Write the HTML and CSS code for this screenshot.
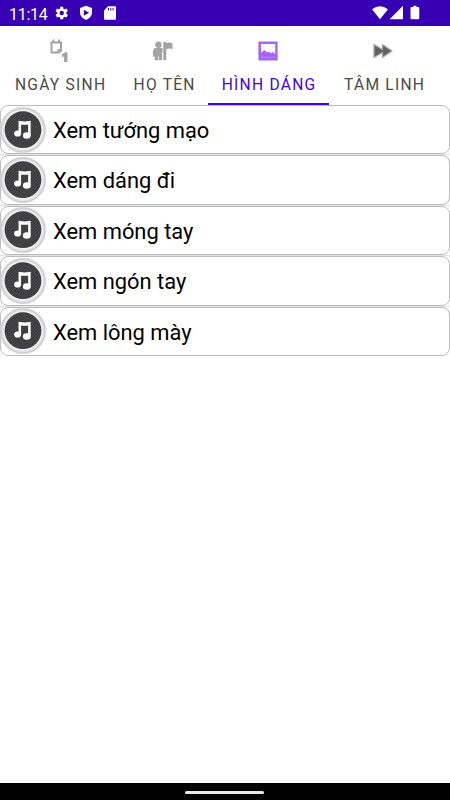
FILE: index.html
```html
<!DOCTYPE html>
<html lang="vi">
<head>
<meta charset="utf-8">
<title>Xem tướng</title>
<link rel="stylesheet" href="styles.css">
</head>
<body>
<svg width="0" height="0" class="defs" aria-hidden="true">
  <defs>
    <pattern id="stripe" width="3" height="3" patternUnits="userSpaceOnUse"><path d="M0 3L3 0" stroke="#505052" stroke-width=".6"/></pattern>
    <radialGradient id="ring"><stop offset=".78" stop-color="#f0f0f0"/><stop offset=".87" stop-color="#e0e0e0"/><stop offset=".93" stop-color="#cacaca"/><stop offset="1" stop-color="#e8e8e8" stop-opacity=".2"/></radialGradient>
    <symbol id="music" viewBox="0 0 48 48">
      <circle cx="24" cy="24" r="23.800" fill="url(#ring)"/>
      <circle cx="24" cy="23.700" r="19.700" fill="#f2f2f2"/>
      <circle cx="24" cy="23.700" r="18.400" fill="#3d3d3f"/>
      <circle cx="24" cy="23.700" r="18" fill="url(#stripe)"/>
      <path d="M20.800 28V16.300q4.800 1 9.600 0v13" fill="none" stroke="#fff" stroke-width="2.500"/>
      <path d="M20.500 17.300q5 1 10 0" fill="none" stroke="#fff" stroke-width="2"/>
      <ellipse cx="18.600" cy="27.500" rx="3.500" ry="3.100" fill="#fff"/>
      <ellipse cx="27.800" cy="29.500" rx="3.900" ry="3.300" fill="#fff"/>
    </symbol>
  </defs>
</svg>
<header class="status">
  <span class="time">11:14</span>
  <svg class="gear" width="18" height="18" viewBox="0 0 24 24"><path fill="#fff" fill-rule="evenodd" d="M19.140 12.940a7 7 0 0 0 0-1.880l2.030-1.580-1.920-3.320-2.390.960a7 7 0 0 0-1.620-.940L14.880 3.640h-3.840l-.36 2.540q-.9.350-1.620.940l-2.390-.96-1.920 3.320 2.030 1.580a7 7 0 0 0 0 1.880l-2.030 1.580 1.920 3.320 2.390-.96q.74.600 1.620.940l.36 2.540h3.840l.36-2.540q.88-.36 1.620-.94l2.390.96 1.920-3.320zM13 14.900a2.900 2.900 0 1 1 0-5.800 2.900 2.900 0 0 1 0 5.800z"/></svg>
  <svg class="shield" width="14" height="16" viewBox="0 0 14 16"><path fill="#fff" d="M7 .7l6 2.300v4.300q0 5-6 7.800-6-2.800-6-7.800V3z"/><path fill="#3700b3" d="M4.900 4.700v6L10 7.700z"/></svg>
  <svg class="sd" width="12" height="14" viewBox="0 0 12 14"><path fill="#fff" d="M4 .3h7q1 0 1 1v11.400q0 1-1 1H1q-1 0-1-1V4.500z"/><path stroke="#3700b3" d="M4.500 2v2.500M6.800 2v2.500M9.100 2v2.500"/></svg>
  <svg class="signals" width="50" height="16" viewBox="0 0 50 16"><g fill="#fff"><path d="M0 4.300q8-6 16 0L8 14.200z"/><path d="M31 .800v13.400H17.600z"/><path d="M39.400 2h2V.7h3V2h2q.9 0 .9 1v10.300q0 1-1 1h-6.800q-1 0-1-1V3q0-1 .9-1z"/></g></svg>
</header>
<nav class="tabs">
  <div class="tab t1">
    <svg width="20" height="24" viewBox="0 0 20 24"><path d="M1.500 3.500h9.500v8l-2 2H1.500z" fill="none" stroke="#a3a3a3" stroke-width="2"/><path fill="#a3a3a3" d="M2.500 .5h2V3h-2zM8 .5h2V3H8zM7.500 10h4l-4 4zM12 15.500l3-2.300h2.500V23H14v-5.500l-2 .5z"/></svg>
    <span>NGÀY SINH</span>
  </div>
  <div class="tab t2">
    <svg width="20" height="20" viewBox="0 0 20 20"><g fill="#a3a3a3"><circle cx="5.500" cy="3.800" r="3.200"/><path d="M1.500 7h8v4.500h-.5v7.800H6v-3.800h-.8v3.800H1.700v-3.800H0v-6zM10.300 1h3v1q3-1.100 6.200.2v6q-3-1.200-6.200-.2v11.300h-3z"/></g></svg>
    <span>HỌ TÊN</span>
  </div>
  <div class="tab t3 active">
    <svg width="20" height="20" viewBox="0 0 20 20"><path fill="#a466f6" fill-rule="evenodd" d="M.4.500h19.200v19H.4zM3 3v9l3.300-3 3 2.500 1.500-1 2.200 1.800 2-1.300 2.200 2V3z"/><path d="M3 16.200h14" stroke="#c197fa" stroke-width=".8"/></svg>
    <span>HÌNH DÁNG</span>
  </div>
  <div class="tab t4">
    <svg width="20" height="20" viewBox="0 0 20 20"><path d="M1 3.500l8.500 5V3.500l9.500 6.500-9.500 6.500v-5L1 16.500z" fill="#626262" stroke="#a9a9a9" stroke-width="1.300" stroke-linejoin="round"/></svg>
    <span>TÂM LINH</span>
  </div>
</nav>
<main class="list">
  <div class="row"><div class="card"><svg class="note"><use href="#music"/></svg><span>Xem tướng mạo</span></div></div>
  <div class="row"><div class="card"><svg class="note"><use href="#music"/></svg><span>Xem dáng đi</span></div></div>
  <div class="row"><div class="card"><svg class="note"><use href="#music"/></svg><span>Xem móng tay</span></div></div>
  <div class="row"><div class="card"><svg class="note"><use href="#music"/></svg><span>Xem ngón tay</span></div></div>
  <div class="row"><div class="card"><svg class="note"><use href="#music"/></svg><span>Xem lông mày</span></div></div>
</main>
<footer class="navbar"><div class="handle"></div></footer>
</body>
</html>
```
FILE: styles.css
```css
* { box-sizing: border-box; }
body {
  margin: 0;
  height: 800px;
  display: flex;
  flex-direction: column;
  overflow: hidden;
  background: #fff;
  font-family: Roboto, sans-serif;
}
.defs { position: absolute; }
svg { display: block; flex: none; }
.status {
  height: 26px;
  flex: none;
  display: flex;
  align-items: center;
  padding: 0 28.500px 0 9px;
  background: #3700b3;
  color: #fff;
}
.time { width: 43px; font-size: 16px; line-height: 26px; padding-top: 3px; letter-spacing: -.25px; }
.shield { margin-left: 9px; }
.sd { margin-left: 11px; }
.signals { margin-left: auto; }
.tabs { height: 79px; flex: none; display: flex; }
.tab {
  display: flex;
  flex-direction: column;
  align-items: center;
  padding-top: 12.500px;
  color: #4a4a4a;
  font-size: 15.600px;
  font-weight: 400;
  letter-spacing: 1.250px;
  white-space: nowrap;
}
.tab svg { height: 24px; margin: 0 2px 11px 0; }
.tab span { line-height: 22px; margin-right: -1.250px; }
.t1 { width: 120px; }
.t2 { width: 88px; }
.t3 { width: 121px; }
.t4 { width: 110px; }
.t1 svg { margin-right: 0; }
.tab.active { color: #4800ea; border-bottom: 2px solid #4800ea; height: 79px; }
.list { flex: 1; }
.row { height: 50.400px; border-bottom: 1px solid #e2e2e2; }
.row:last-child { border-bottom: 0; }
.card {
  height: 49.400px;
  display: flex;
  align-items: center;
  border: 1px solid #bdbdbd;
  border-radius: 8px;
  font-size: 21.900px;
  color: #000;
}
.note { width: 48px; height: 48px; margin-left: -2px; }
.card span { margin-left: 6px; white-space: nowrap; padding-top: 1.500px; }
.navbar {
  height: 17px;
  flex: none;
  background: #000;
  display: flex;
  justify-content: center;
  padding-top: 8px;
}
.handle { width: 79px; height: 3px; margin-right: 1px; border-radius: 2px; background: #e8e8e8; }
```
